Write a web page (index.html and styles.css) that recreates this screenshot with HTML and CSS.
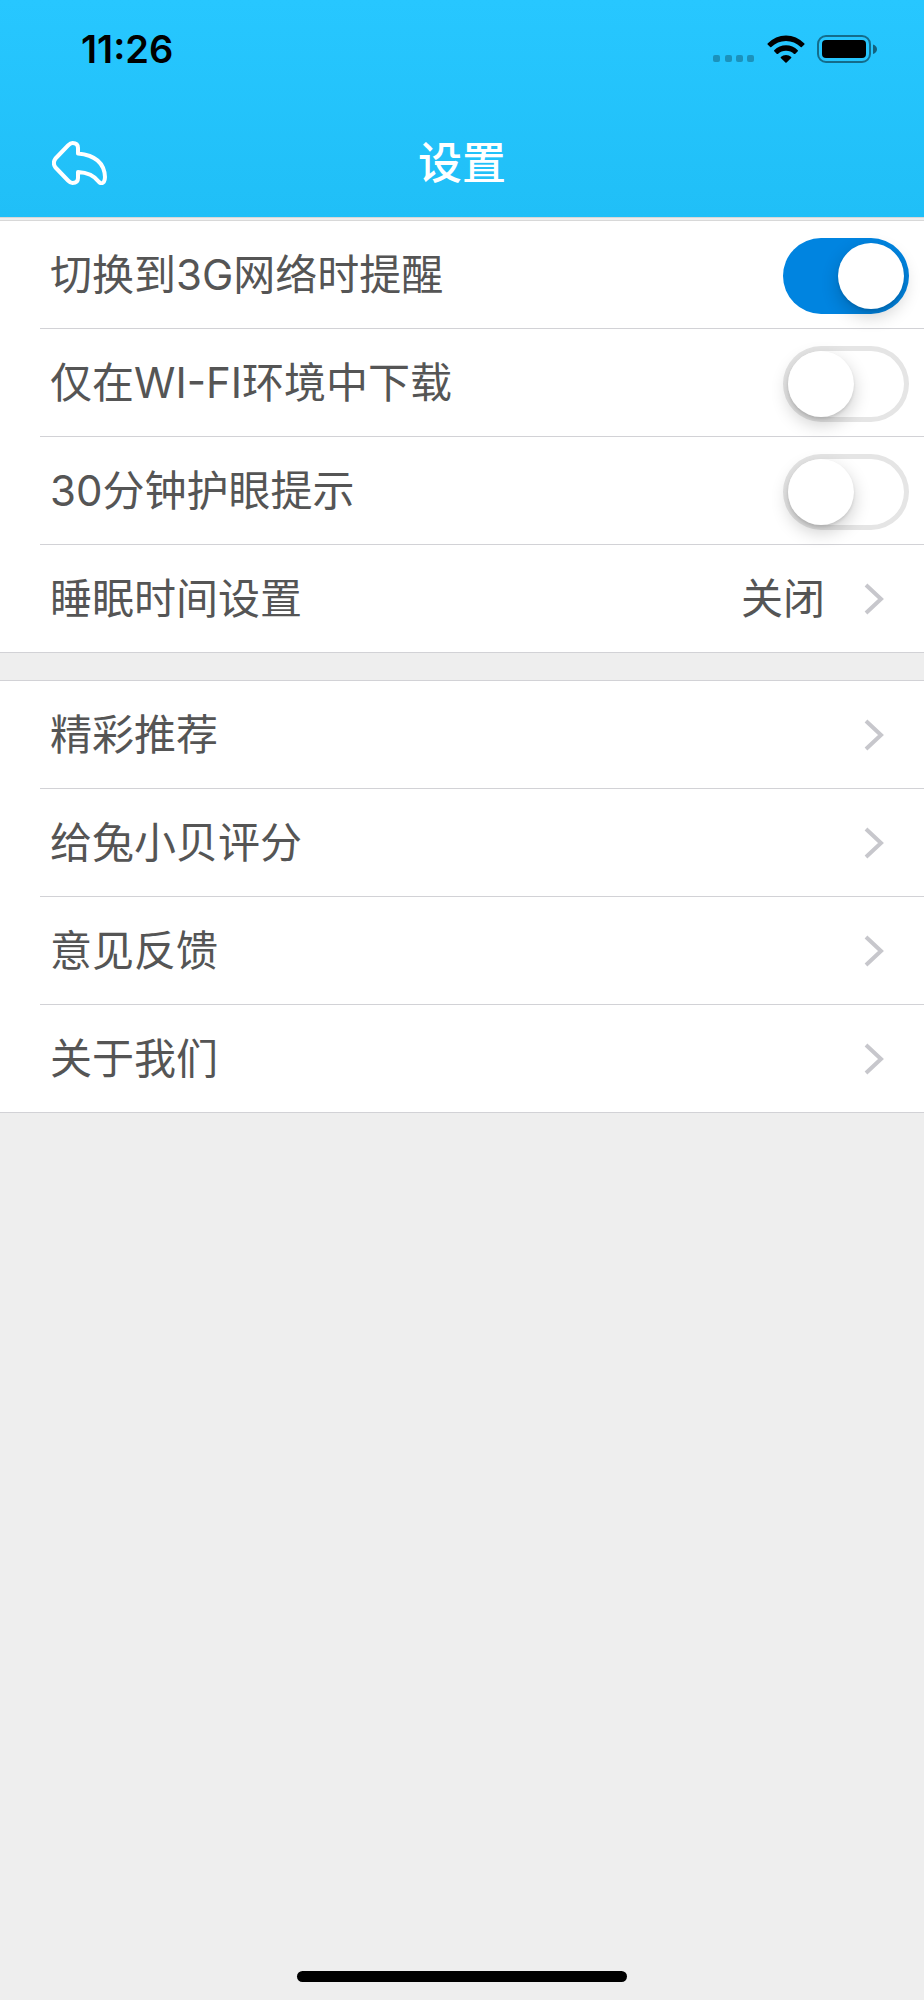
FILE: index.html
```html
<!DOCTYPE html>
<html lang="zh-CN">
<head>
    <meta charset="UTF-8">
    <meta name="viewport" content="width=device-width, initial-scale=1">
    <title>设置</title>
    <link rel="stylesheet" href="styles.css">
</head>
<body>

<header class="header">
    <div class="status-bar">
        <span class="time">11:26</span>
        <div class="status-icons">
            <svg class="signal" width="42" height="28" viewBox="0 0 42 28">
                <rect x="0" y="20" width="7" height="7" rx="2"/>
                <rect x="12" y="20" width="7" height="7" rx="2"/>
                <rect x="23" y="20" width="7" height="7" rx="2"/>
                <rect x="34" y="20" width="7" height="7" rx="2"/>
            </svg>
            <svg class="wifi" width="38" height="28" viewBox="0 0 38 28">
                <path d="M0.6 8.6 Q8.5 0.5 19 0.5 Q29.5 0.5 37.4 8.6 Q37.8 9.1 37.4 9.6 L34.8 12.1 Q34.2 12.5 33.7 12 Q27.5 6 19 6 Q10.5 6 4.3 12 Q3.8 12.5 3.2 12.1 L0.6 9.6 Q0.2 9.1 0.6 8.6 Z"/>
                <path d="M7.2 15.3 Q12.2 10.3 19 10.3 Q25.8 10.3 30.8 15.3 Q31.2 15.8 30.8 16.3 L28.1 18.9 Q27.6 19.3 27.1 18.9 Q23.7 15.7 19 15.7 Q14.3 15.7 10.9 18.9 Q10.4 19.3 9.9 18.9 L7.2 16.3 Q6.8 15.8 7.2 15.3 Z"/>
                <path d="M13.8 22 Q16 19.9 19 19.9 Q22 19.9 24.2 22 Q24.6 22.5 24.2 23 L19.6 27.4 Q19 27.9 18.4 27.4 L13.8 23 Q13.4 22.5 13.8 22 Z"/>
            </svg>
            <svg class="battery" width="60" height="28" viewBox="0 0 60 28">
                <rect class="battery-shell" x="1" y="1" width="52" height="26" rx="8"/>
                <rect x="5" y="5" width="44" height="18" rx="4"/>
                <path class="battery-cap" d="M56 9.5 Q60 11 60 14.3 Q60 17.6 56 19.1 Z"/>
            </svg>
        </div>
    </div>
    <div class="nav-bar">
        <button type="button" class="back" aria-label="返回">
            <svg width="56" height="44" viewBox="0 0 56 44">
                <path d="M26 12.5 V7 Q26 2 20.5 2 Q18.500 2 16 4.500 L3.500 17.500 Q0.200 22 3.500 26.500 L16 39.500 Q18.500 42 20.500 42 Q26 42 26 37 V31 Q40 31.500 47 41 Q49.500 43.500 51.800 41 Q53 39 53 36 Q52 15 26 12.500 Z"/>
            </svg>
        </button>
        <h1 class="title">设置</h1>
    </div>
</header>

<main>
    <ul class="group">
        <li class="row">
            <label for="remind-3g">切换到3G网络时提醒</label>
            <input type="checkbox" class="switch" id="remind-3g" checked>
        </li>
        <li class="row">
            <label for="wifi-only">仅在WI-FI环境中下载</label>
            <input type="checkbox" class="switch" id="wifi-only">
        </li>
        <li class="row">
            <label for="eye-care">30分钟护眼提示</label>
            <input type="checkbox" class="switch" id="eye-care">
        </li>
        <li class="row">
            <a class="link" href="#sleep">
                <span>睡眠时间设置</span>
                <span class="value">关闭</span>
                <svg class="chevron" width="20" height="32" viewBox="0 0 20 32"><path d="M2 2 L17 16 L2 30"/></svg>
            </a>
        </li>
    </ul>

    <ul class="group">
        <li class="row">
            <a class="link" href="#recommend">
                <span>精彩推荐</span>
                <svg class="chevron" width="20" height="32" viewBox="0 0 20 32"><path d="M2 2 L17 16 L2 30"/></svg>
            </a>
        </li>
        <li class="row">
            <a class="link" href="#rate">
                <span>给兔小贝评分</span>
                <svg class="chevron" width="20" height="32" viewBox="0 0 20 32"><path d="M2 2 L17 16 L2 30"/></svg>
            </a>
        </li>
        <li class="row">
            <a class="link" href="#feedback">
                <span>意见反馈</span>
                <svg class="chevron" width="20" height="32" viewBox="0 0 20 32"><path d="M2 2 L17 16 L2 30"/></svg>
            </a>
        </li>
        <li class="row">
            <a class="link" href="#about">
                <span>关于我们</span>
                <svg class="chevron" width="20" height="32" viewBox="0 0 20 32"><path d="M2 2 L17 16 L2 30"/></svg>
            </a>
        </li>
    </ul>
</main>

<div class="home-indicator"></div>

</body>
</html>
```

FILE: styles.css
```css
* {
  box-sizing: border-box;
}

body {
  display: flex;
  flex-direction: column;
  min-height: 100vh;
  margin: 0;
  background-color: #eee;
  color: #555;
  font-family: Inter, "Noto Sans CJK SC", sans-serif;
  font-size: 42px;
  line-height: 60px;
}

/* header */

.header {
  background: linear-gradient(#27c7ff, #20bff7) padding-box;
  border-bottom: 4px double #d8d8d8;
}

.status-bar {
  display: flex;
  justify-content: space-between;
  align-items: center;
  height: 98px;
  padding: 0 47px 0 81px;
  color: #000;
}

.time {
  font-size: 38px;
  font-weight: 600;
}

.status-icons {
  display: flex;
  gap: 12px;
}

.signal {
  opacity: 0.25;
}

.battery-shell {
  fill: none;
  stroke: #000;
  stroke-width: 2;
  opacity: 0.45;
}

.battery-cap {
  opacity: 0.5;
}

.nav-bar {
  display: grid;
  grid-template-columns: 1fr auto 1fr;
  align-items: center;
  height: 119px;
  padding: 10px 52px 0;
}

.back {
  display: flex;
  justify-self: start;
  padding: 0;
  border: none;
  background: none;
  cursor: pointer;
}

.back path {
  fill: none;
  stroke: #fff;
  stroke-width: 4;
  stroke-linejoin: round;
}

.title {
  margin: 0;
  color: #fff;
  font-size: 44px;
  font-weight: 500;
}

/* settings list */

.group {
  margin: 0 0 27px;
  padding: 0;
  list-style: none;
  background-color: #fff;
  border-bottom: 1px solid #d2d2d6;
}

.group + .group {
  border-top: 1px solid #d2d2d6;
}

.row {
  display: flex;
  align-items: center;
  height: 108px;
  margin-left: 40px;
  padding: 0 15px 0 10px;
  border-bottom: 1px solid #d2d2d6;
}

.row:last-child {
  height: 107px;
  border-bottom: none;
}

.row label {
  flex: 1;
}

.link {
  display: flex;
  flex: 1;
  align-items: center;
  justify-content: space-between;
  padding-right: 25px;
  color: inherit;
  text-decoration: none;
}

.value {
  margin-left: auto;
  margin-right: 39px;
}

.chevron path {
  fill: none;
  stroke: #c7c7cc;
  stroke-width: 4;
}

.switch {
  appearance: none;
  width: 126px;
  height: 76px;
  margin: 2px 0 0;
  padding: 5px;
  border-radius: 38px;
  background-color: #fff;
  box-shadow: inset 0 0 0 5px #e5e5e5;
  cursor: pointer;
}

.switch::before {
  content: "";
  display: block;
  width: 66px;
  height: 66px;
  border-radius: 50%;
  background-color: #fff;
  box-shadow: 0 7px 18px rgba(0, 0, 0, 0.2), 0 2px 3px rgba(0, 0, 0, 0.1);
}

.switch:checked {
  background-color: #0084e0;
  box-shadow: none;
}

.switch:checked::before {
  margin-left: auto;
}

.home-indicator {
  width: 330px;
  height: 11px;
  margin: auto auto 18px;
  border-radius: 6px;
  background-color: #000;
}
```
